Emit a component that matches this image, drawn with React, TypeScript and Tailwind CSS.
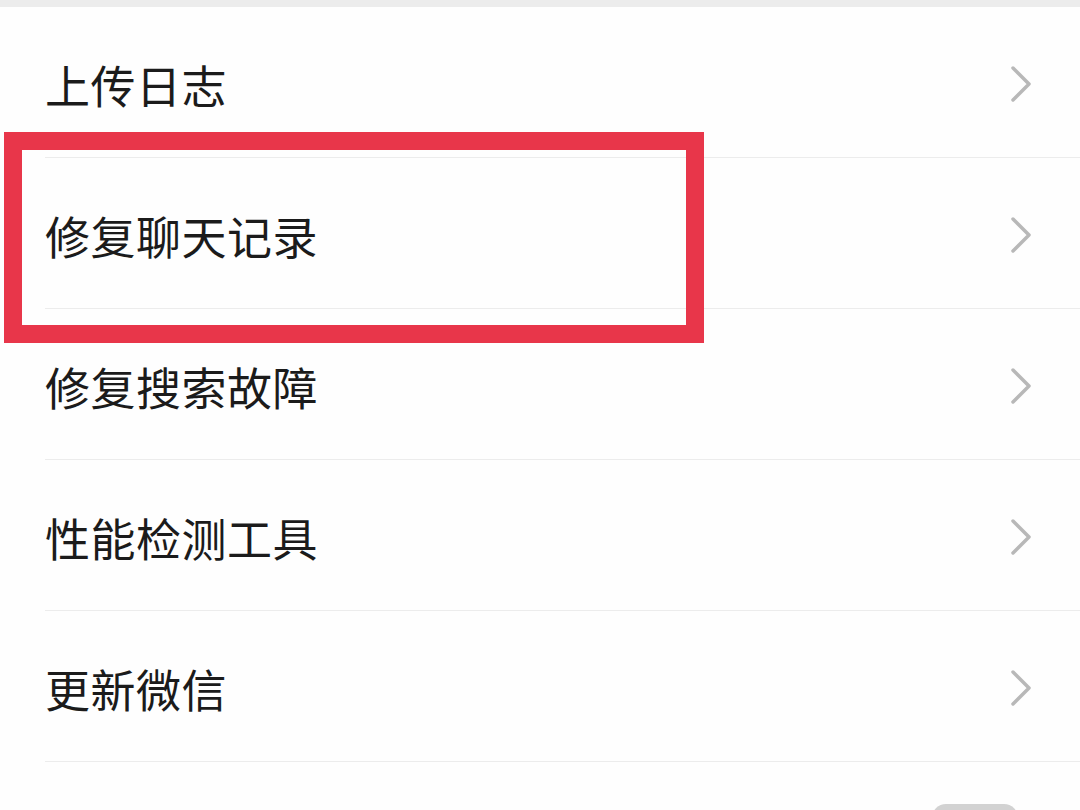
import React from "react";

const items = ["上传日志", "修复聊天记录", "修复搜索故障", "性能检测工具", "更新微信"];

function Chevron() {
  return (
    <svg width="22" height="38" viewBox="0 0 22 38" fill="none">
      <path d="M3 3 L19 19 L3 35" stroke="#b8b8b8" strokeWidth="3.5" strokeLinecap="round" strokeLinejoin="round" />
    </svg>
  );
}

export default function App() {
  return (
    <div
      className="relative w-[1080px] h-[810px] overflow-hidden bg-[#fefefe]"
      style={{ fontFamily: '"Noto Sans CJK SC", "Noto Sans", sans-serif' }}
    >
      <div className="h-[7px] bg-[#ececec]" />
      <div className="flex flex-col">
        {items.map((t) => (
          <div key={t} className="flex flex-col h-[151px]">
            <div className="flex flex-1 items-center justify-between pl-[45px] pr-[48px] pt-[4px]">
              <span className="text-[45px] leading-none text-[#1b1b1b] tracking-[0.5px]">{t}</span>
              <Chevron />
            </div>
            <div className="ml-[45px] h-px bg-[#ececec]" />
          </div>
        ))}
      </div>
      <div className="flex justify-end pr-[62px] pt-[42px]">
        <div className="w-[86px] h-[20px] rounded-t-[14px] bg-[#d2d2d2]" />
      </div>
      <div className="absolute left-[4px] top-[132px] w-[700px] h-[211px] border-[18px] border-[#e8364a]" />
    </div>
  );
}
